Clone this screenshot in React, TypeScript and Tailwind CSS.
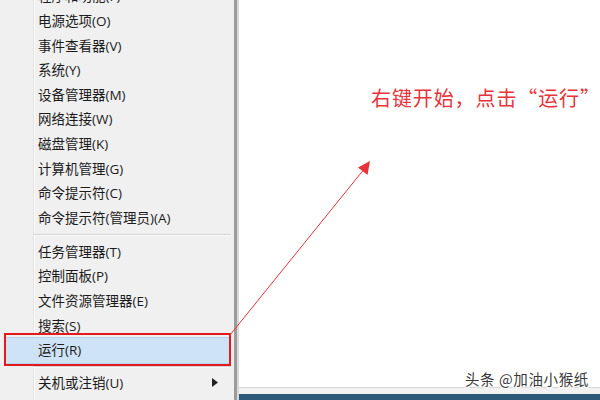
import React from "react";

const font = { fontFamily: '"Segoe UI", "Open Sans", "Noto Sans CJK SC", sans-serif' };

function Item({ label, highlight, arrow }: { label: string; highlight?: boolean; arrow?: boolean }) {
  if (highlight) {
    return (
      <div className="relative h-[24.6px]">
        <div className="absolute left-[4px] right-[4px] -top-[1px] -bottom-[1px] bg-[#cfe3f6] border border-[#b3d3f0]" />
        <div className="absolute left-[4px] right-[3px] -top-[5px] -bottom-[3px] border-2 border-[#e3191c]" />
        <div className="relative flex items-center h-full pl-[38px] text-[13.5px] text-[#1b1b1b]">{label}</div>
      </div>
    );
  }
  return (
    <div className="relative flex items-center h-[24.6px] pl-[38px] pr-[14px] text-[13.5px] text-[#1b1b1b]">
      <span className="flex-1 whitespace-nowrap">{label}</span>
      {arrow && (
        <svg width="6" height="9" viewBox="0 0 6 9" className="mr-[2px]">
          <path d="M0 0 L6 4.5 L0 9 Z" fill="#222" />
        </svg>
      )}
    </div>
  );
}

function Sep({ h }: { h: string }) {
  return (
    <div className={`flex items-center pl-[33px] pr-[3px] ${h}`}>
      <div className="w-full">
        <div className="h-px bg-[#d5d5d5]" />
        <div className="h-px bg-[#fafafa]" />
      </div>
    </div>
  );
}

export default function App() {
  const group1 = [
    "程序和功能(F)",
    "电源选项(O)",
    "事件查看器(V)",
    "系统(Y)",
    "设备管理器(M)",
    "网络连接(W)",
    "磁盘管理(K)",
    "计算机管理(G)",
    "命令提示符(C)",
    "命令提示符(管理员)(A)",
  ];
  const group2 = ["任务管理器(T)", "控制面板(P)", "文件资源管理器(E)", "搜索(S)"];
  return (
    <div className="relative w-[600px] h-[400px] overflow-hidden bg-white flex" style={font}>
      {/* menu */}
      <div className="relative w-[234px] h-full bg-[#f0f0f0] shrink-0">
        <div className="absolute left-[33px] top-0 bottom-0 w-px bg-[#e3e3e3]" />
        <div className="absolute left-[34px] top-0 bottom-0 w-px bg-[#fbfbfb]" />
        <div className="relative mt-[-15.8px]">
          {group1.map((l) => (
            <Item key={l} label={l} />
          ))}
          <Sep h="h-[9.5px]" />
          {group2.map((l) => (
            <Item key={l} label={l} />
          ))}
          <Item label="运行(R)" highlight />
          <Sep h="h-[8px]" />
          <Item label="关机或注销(U)" arrow />
        </div>
      </div>
      {/* menu border */}
      <div className="w-[3px] h-full bg-[#9c9c9c] shrink-0" />
      <div className="w-[2px] h-full bg-[#d9d9d9] shrink-0" />
      {/* right area */}
      <div className="flex-1 flex flex-col h-full min-w-0">
        <div className="flex-1 bg-white pl-[132px] pt-[84px]">
          <div className="text-[20px] leading-[28px] tracking-[0.9px] text-[#e8333b] whitespace-nowrap" style={{ fontFamily: '"Noto Sans CJK SC", sans-serif' }}>
            右键开始，点击“运行”
          </div>
        </div>
        <div className="h-px bg-[#d6d6d6]" />
        <div className="h-[6px] bg-[#f2f2f2]" />
        <div className="h-[6px] bg-[#2d5a78]" />
      </div>
      {/* arrow annotation */}
      <svg className="absolute left-0 top-0" width="600" height="400" viewBox="0 0 600 400">
        <line x1="230" y1="335" x2="365" y2="168" stroke="#e8333b" strokeWidth="1" />
        <path d="M370 161 L367.5 175 L358 167.5 Z" fill="#e8333b" />
      </svg>
      {/* watermark */}
      <div
        className="absolute left-[465px] top-[369px] text-[14.5px] leading-[20px] tracking-[0.6px] text-[#3a3a3a] whitespace-nowrap"
        style={{ fontFamily: '"Noto Sans CJK SC", sans-serif', textShadow: "1px 1px 0 #fff, -1px -1px 0 #fff, 1px -1px 0 #fff, -1px 1px 0 #fff" }}
      >
        头条 @加油小猴纸
      </div>
    </div>
  );
}
